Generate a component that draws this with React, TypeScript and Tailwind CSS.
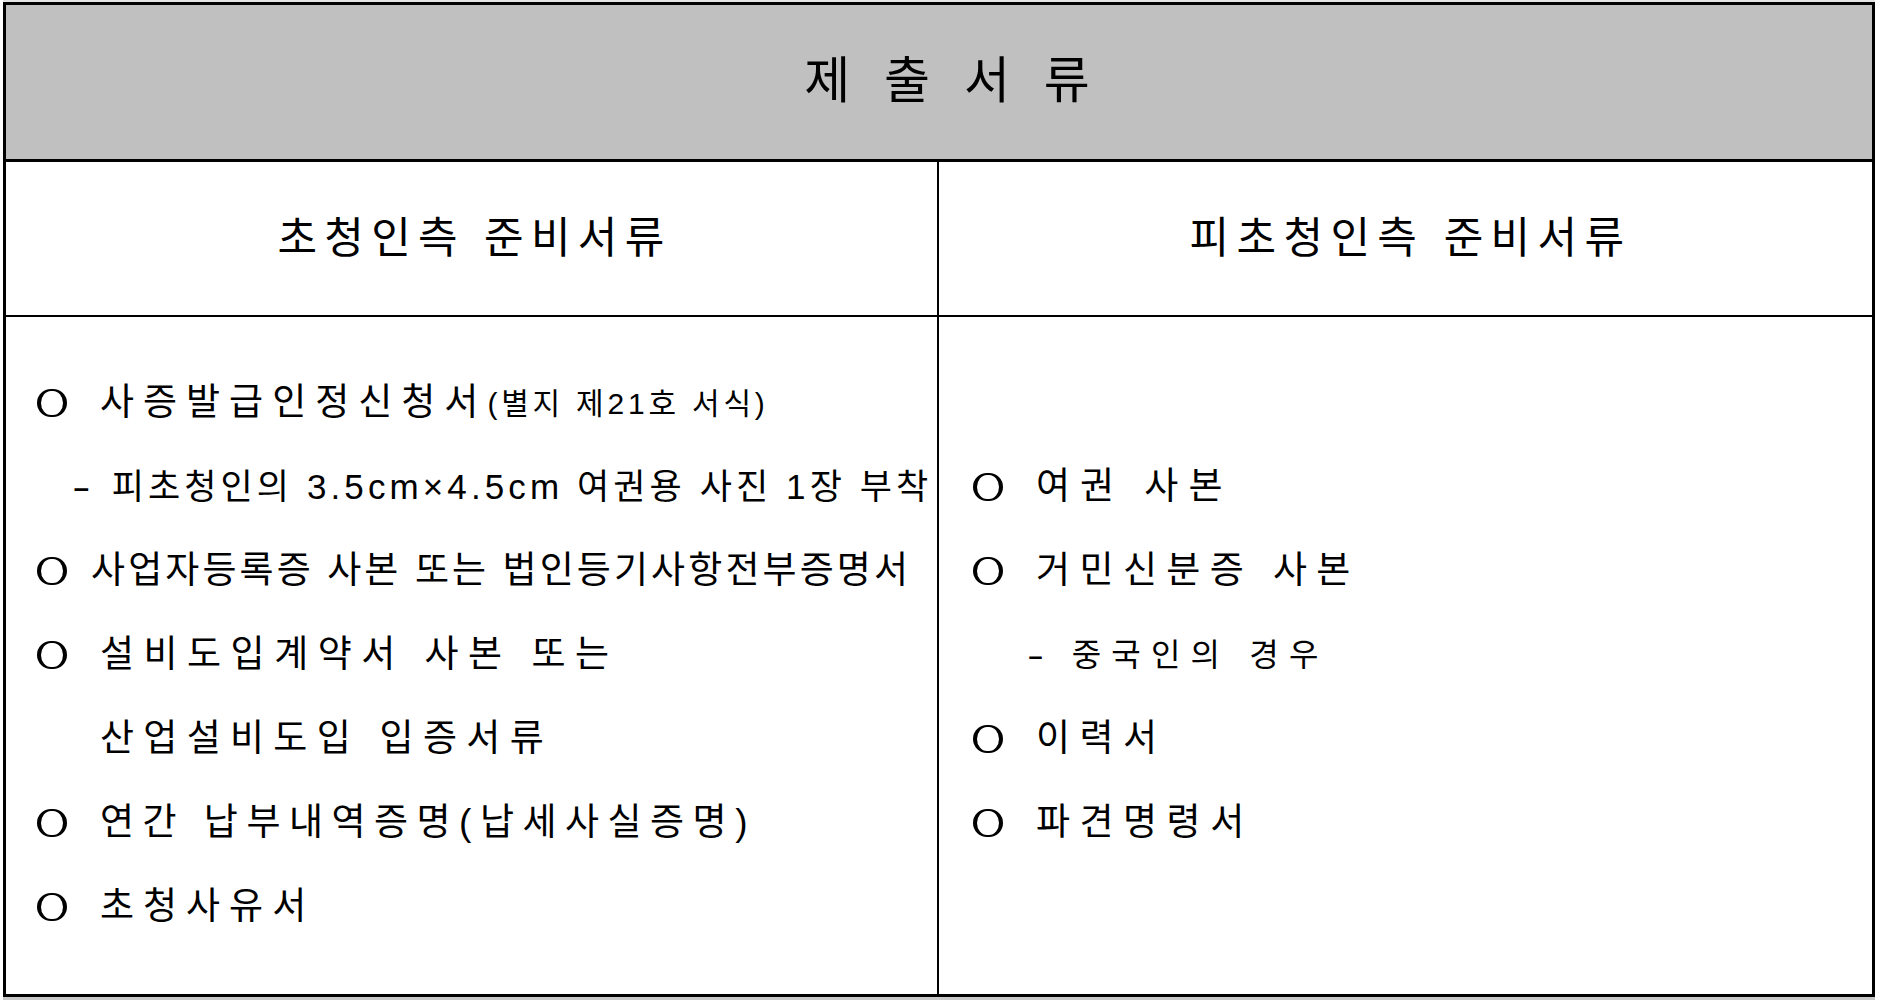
import React from "react";

const FONT = "font-['Liberation_Sans','Noto_Sans_CJK_KR',sans-serif]";

function Circle() {
  return (
    <span className="inline-block w-[30px] h-[28px] rounded-full border-x-[4px] border-y-[2.5px] border-black shrink-0" />
  );
}

function Line({ children, className = "" }: { children: React.ReactNode; className?: string }) {
  return <div className={`flex h-[84px] items-center whitespace-nowrap ${className}`}>{children}</div>;
}

export default function App() {
  return (
    <div className={`w-[1882px] h-[1000px] bg-white text-black ${FONT} overflow-hidden`}>
      <div className="ml-[3px] h-[2px] w-[1872px] bg-[#e4e4e4]" />
      <div className="ml-[3px] w-[1872px] h-[995px] border-[3px] border-black flex flex-col">
        <div className="h-[154px] bg-[#c0c0c0] flex items-center justify-center pl-[26px] pb-[2px]">
          <span className="text-[50px] tracking-[10px] leading-none">제 출 서 류</span>
        </div>
        <div className="h-[3px] bg-black" />
        <div className="h-[153px] flex">
          <div className="w-[931px] flex items-center justify-center pl-[6px]">
            <span className="text-[43px] tracking-[7.3px] leading-none">초청인측 준비서류</span>
          </div>
          <div className="w-[2px] bg-black" />
          <div className="flex-1 flex items-center justify-center pl-[10px]">
            <span className="text-[43px] tracking-[7.4px] leading-none">피초청인측 준비서류</span>
          </div>
        </div>
        <div className="h-[2px] bg-black" />
        <div className="flex-1 flex">
          <div className="w-[931px] pt-[44px] pl-[31px]">
            <Line>
              <Circle />
              <span className="ml-[33px] text-[37px] tracking-[9px]">사증발급인정신청서</span>
              <span className="text-[30px] tracking-[3.8px]">(별지 제21호 서식)</span>
            </Line>
            <Line className="pl-[35px]">
              <span className="inline-block text-[35px] scale-x-[1.6] origin-left">-</span>
              <span className="ml-[28px] text-[35px] tracking-[4.1px]">피초청인의 3.5cm×4.5cm 여권용 사진 1장 부착</span>
            </Line>
            <Line>
              <Circle />
              <span className="ml-[24px] text-[37px] tracking-[3.1px]">사업자등록증 사본 또는 법인등기사항전부증명서</span>
            </Line>
            <Line>
              <Circle />
              <span className="ml-[33px] text-[37px] tracking-[9.5px]">설비도입계약서 사본 또는</span>
            </Line>
            <Line className="pl-[63px]">
              <span className="text-[37px] tracking-[9.3px]">산업설비도입 입증서류</span>
            </Line>
            <Line>
              <Circle />
              <span className="ml-[33px] text-[37px] tracking-[8.5px]">연간 납부내역증명(납세사실증명)</span>
            </Line>
            <Line>
              <Circle />
              <span className="ml-[33px] text-[37px] tracking-[9px]">초청사유서</span>
            </Line>
          </div>
          <div className="w-[2px] bg-black" />
          <div className="flex-1 pt-[128px] pl-[34px]">
            <Line>
              <Circle />
              <span className="ml-[33px] text-[37px] tracking-[10px]">여권 사본</span>
            </Line>
            <Line>
              <Circle />
              <span className="ml-[33px] text-[37px] tracking-[9.4px]">거민신분증 사본</span>
            </Line>
            <Line className="pl-[54px]">
              <span className="inline-block text-[32px] scale-x-[1.6] origin-left">-</span>
              <span className="ml-[34px] text-[32px] tracking-[10.2px]">중국인의 경우</span>
            </Line>
            <Line>
              <Circle />
              <span className="ml-[33px] text-[37px] tracking-[9.5px]">이력서</span>
            </Line>
            <Line>
              <Circle />
              <span className="ml-[33px] text-[37px] tracking-[9.5px]">파견명령서</span>
            </Line>
          </div>
        </div>
      </div>
      <div className="ml-[3px] h-[3px] w-[1872px] bg-[#c8c8c8]" />
    </div>
  );
}
